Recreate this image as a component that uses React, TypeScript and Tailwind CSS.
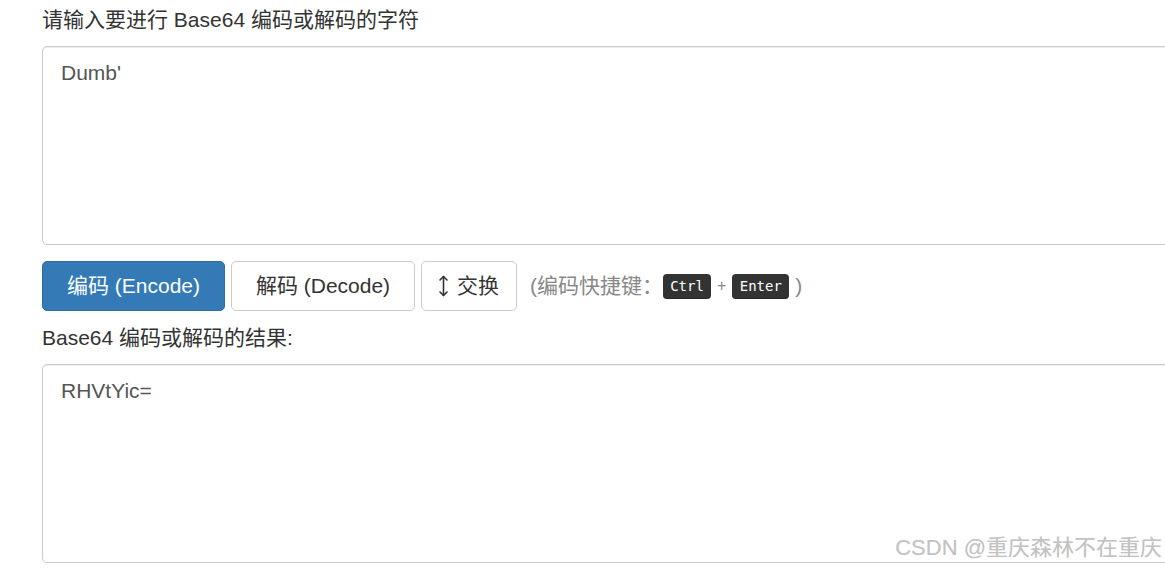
import React from "react";

function SwapIcon() {
  return (
    <svg width="9" height="22" viewBox="0 0 9 22" className="mr-[9px]" fill="none" stroke="#333" strokeWidth="1.6" strokeLinecap="round" strokeLinejoin="round">
      <path d="M4.5 1.5 V20.5" />
      <path d="M1 5 L4.5 1.5 L8 5" />
      <path d="M1 17 L4.5 20.5 L8 17" />
    </svg>
  );
}

const mono = { fontFamily: '"DejaVu Sans Mono", "Liberation Mono", monospace' };

export default function App() {
  const font = { fontFamily: '"Liberation Sans", Arial, "Noto Sans CJK SC", sans-serif' };
  return (
    <div className="relative w-[1165px] h-[568px] overflow-hidden bg-white text-[#333]" style={font}>
      <div className="pl-[42px]">
        <div className="mt-[6px] h-[28px] text-[21px] leading-[28px]">请输入要进行 Base64 编码或解码的字符</div>
        <div className="mt-[12px] w-[1200px] h-[199px] rounded-[5px] border border-[#ccc] shadow-[inset_0_1px_1px_rgba(0,0,0,0.075)] px-[18px] pt-[12px] text-[21px] leading-[28px] text-[#555]">
          Dumb'
        </div>
        <div className="mt-[16px] flex items-center h-[50px]">
          <div className="w-[183px] h-[50px] flex items-center justify-center rounded-[5px] bg-[#337ab7] border border-[#2e6da4] text-white text-[21px]">
            编码 (Encode)
          </div>
          <div className="ml-[6px] w-[184px] h-[50px] flex items-center justify-center rounded-[5px] bg-white border border-[#ccc] text-[21px]">
            解码 (Decode)
          </div>
          <div className="ml-[6px] w-[96px] h-[50px] flex items-center justify-center rounded-[5px] bg-white border border-[#ccc] text-[21px]">
            <SwapIcon />
            交换
          </div>
          <div className="ml-[13px] flex items-center text-[21px] text-[#888]">
            <span>(编码快捷键：</span>
            <span className="inline-flex items-center justify-center w-[48px] h-[25px] rounded-[4px] bg-[#333] text-white text-[14px] leading-none shadow-[inset_0_-1px_0_rgba(0,0,0,0.25)]" style={mono}>Ctrl</span>
            <span className="mx-[6px] text-[16px]">+</span>
            <span className="inline-flex items-center justify-center w-[57px] h-[25px] rounded-[4px] bg-[#333] text-white text-[14px] leading-none shadow-[inset_0_-1px_0_rgba(0,0,0,0.25)]" style={mono}>Enter</span>
            <span className="ml-[6px]">)</span>
          </div>
        </div>
        <div className="mt-[13px] h-[28px] text-[21px] leading-[28px]">Base64 编码或解码的结果:</div>
        <div className="mt-[12px] w-[1200px] h-[199px] rounded-[5px] border border-[#ccc] shadow-[inset_0_1px_1px_rgba(0,0,0,0.075)] px-[18px] pt-[12px] text-[21px] leading-[28px] text-[#555]">
          RHVtYic=
        </div>
      </div>
      <div className="absolute right-[3px] top-[533px] text-[22px] leading-[30px] text-[#c2c2c2] [text-shadow:0_0_1px_rgba(0,0,0,0.08)]">
        CSDN @重庆森林不在重庆
      </div>
    </div>
  );
}
